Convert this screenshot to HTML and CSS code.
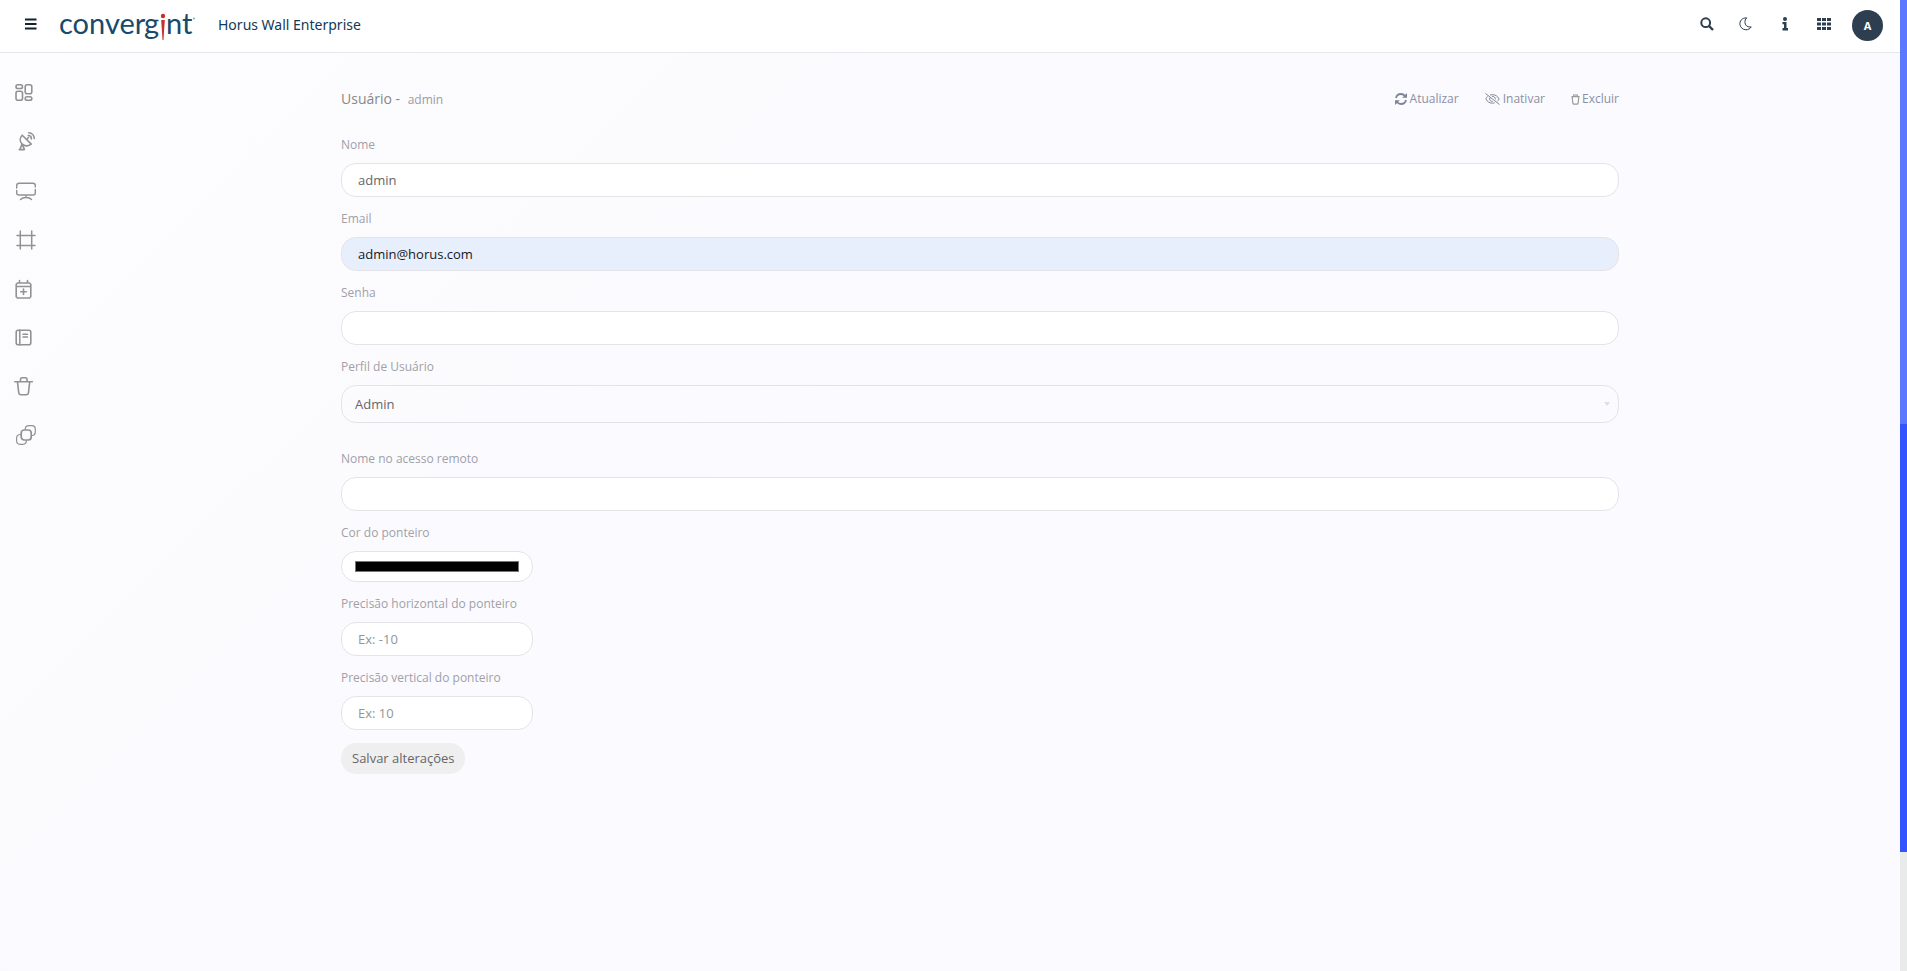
FILE: index.html
```html
<!DOCTYPE html>
<html lang="pt-BR">
<head>
<meta charset="utf-8">
<title>Horus Wall Enterprise</title>
<link rel="stylesheet" href="styles.css">
</head>
<body>
<div class="app">
  <header class="topbar">
    <button class="icon-btn menu" aria-label="Menu"><svg width="12" height="12" viewBox="0 0 12 12"><path d="M0 1.5h11.500M0 6h11.500M0 10.500h11.500" stroke="#14232c" stroke-width="2"/></svg></button>
    <a class="logo" href="#" aria-label="Convergint">
      <svg width="138" height="44" viewBox="0 0 138 44">
        <text class="logo-text" x="0" y="32">conver</text>
        <text class="logo-text" x="85" y="32">g</text>
        <text class="logo-text" x="107" y="32">nt</text>
        <circle cx="104" cy="14" r="2.200" fill="#c8302c"/>
        <path d="M102.200 18h3.600L104.500 38h-1z" fill="#c8302c"/>
        <circle cx="135" cy="16.500" r="1" fill="#8aa3b5"/>
      </svg>
    </a>
    <span class="product">Horus Wall Enterprise</span>
    <nav class="tools" aria-label="Ferramentas">
      <button class="icon-btn" aria-label="Buscar"><svg width="14" height="14" viewBox="0 0 14 14" fill="none" stroke="#2c3e4f"><circle cx="5.700" cy="5.700" r="4.400" stroke-width="2"/><path d="M9 9l4 4" stroke-width="2.400"/></svg></button>
      <button class="icon-btn" aria-label="Modo escuro"><svg width="14" height="14" viewBox="0 0 14 14" fill="none" stroke="#2c3e4f" stroke-width="1"><path d="M7.800.9C2.500.6.700 4.500.9 7.200c.3 3.200 2.800 5.500 6 5.600 2.400 0 4.200-1.100 5.300-2.900-3.200.6-5.800-1-6.200-4C5.700 3.800 6.400 2 7.800.9z" stroke-linejoin="round"/></svg></button>
      <button class="icon-btn" aria-label="Informações"><svg width="14" height="14" viewBox="0 0 14 14" fill="#2c3e4f"><circle cx="7" cy="2" r="2"/><path d="M4.500 5h4v6H10v2.500H4.500V11H6V7.200H4.500z"/></svg></button>
      <button class="icon-btn" aria-label="Aplicativos"><svg width="14" height="14" viewBox="0 0 14 14" fill="#2c3e4f"><path d="M0 1h4v3H0zM5 1h4v3H5zM10 1h4v3h-4zM0 5.500h4v3H0zM5 5.500h4v3H5zM10 5.500h4v3h-4zM0 10h4v3H0zM5 10h4v3H5zM10 10h4v3h-4z"/></svg></button>
      <button class="avatar" aria-label="Conta">A</button>
    </nav>
  </header>
  <div class="body">
    <nav class="sidebar" aria-label="Principal">
      <a href="#" aria-label="Painel"><svg viewBox="0 0 24 24"><g stroke-width="1.600"><rect x="2" y="4.800" width="6.500" height="3.700" rx="1.800"/><rect x="11.200" y="4.800" width="6.600" height="9" rx="2"/><rect x="2" y="11.300" width="6.500" height="9" rx="2"/><rect x="11.200" y="16.700" width="6.600" height="3.600" rx="1.800"/></g></svg></a>
      <a href="#" aria-label="Fontes"><svg viewBox="0 0 24 24"><path d="M8.200 6.200c-2.800 3-2.400 6.500-.2 8.700 2.300 2.300 5.800 2.600 9.300.2zM8 15l-2 5.300M5.300 20.600h5M8.500 16.500l2 3.800M12.500 10.500l2-2M14.200 6.500c1.800 0 3.200 1.400 3.200 3.400M14.700 3.700c3.200.2 5.500 2.600 5.600 5.800" stroke-width="1.600"/></svg></a>
      <a href="#" aria-label="Telas"><svg viewBox="0 0 24 24"><path d="M2.700 10V7.500c0-1.600.9-2.300 2.300-2.300h14c1.600 0 2.300.9 2.300 2.300V9M21.300 11.500V15c0 1.400-.8 2-2.300 2H5c-1.600 0-2.300-.7-2.300-2v-2.500M12 17v2.300M6.500 21.500c1.300-1.500 3.200-2 5.500-2s4.300.5 5.500 2" stroke-width="1.400"/></svg></a>
      <a href="#" aria-label="Layouts"><svg viewBox="0 0 24 24"><path d="M6.300 4v18M17.700 4v18M3 8.400h18M3 18.500h18" stroke-width="1.500"/></svg></a>
      <a href="#" aria-label="Agenda"><svg viewBox="0 0 24 24"><path d="M3.500 7h12l1.300 1.300v12.400L15.500 22h-12l-1.300-1.300V8.300zM2.200 10.500h14.600M5.500 4.500V7M13.500 4.500V7M9.500 13v5.500M6.700 15.700h5.600" stroke-width="1.600"/></svg></a>
      <a href="#" aria-label="Registros"><svg viewBox="0 0 24 24"><rect x="2.200" y="5.200" width="14.600" height="14.600" rx="2" stroke-width="1.600"/><path d="M5.800 5v15M9 9.200h4.500M9 12h4.500" stroke-width="1.500"/></svg></a>
      <a href="#" aria-label="Lixeira"><svg viewBox="0 0 24 24"><path d="M.8 7.700h17.600M6.500 7.500V5.300c0-1 .5-1.500 1.500-1.500h3.500c1 0 1.500.5 1.500 1.500v2.200M3.500 8l1.200 10.500c.1 1.200.8 2.300 2.300 2.300h5.200c1.500 0 2.200-1.100 2.300-2.300L15.700 8" stroke-width="1.600"/></svg></a>
      <a href="#" aria-label="Grupos"><svg viewBox="0 0 24 24"><rect x="7.200" y="7" width="10" height="10" rx="3" stroke-width="1.700"/><path d="M11.200 6.500c0-2.500 1.400-3.800 3.800-3.800h2.800c2.200 0 3.500 1.300 3.500 3.500v2.600c0 2.300-1.200 3.700-3.400 3.700M6.800 11.500c-2.700 0-4.200 1.200-4.200 3.500v2.800c0 2.200 1.300 3.500 3.500 3.500h2.700c2.300 0 3.600-1.400 3.600-3.700" stroke-width="1.200"/></svg></a>
    </nav>
    <main class="main">
      <div class="content">
        <div class="heading">
          <h1>Usuário - <small>admin</small></h1>
          <div class="actions">
            <button><svg width="12" height="12" viewBox="0 0 12 12" fill="none" stroke="#7e8498" stroke-width="1.800"><path d="M1 5C1.500 2.500 3.600 1 6 1c1.700 0 3 .7 4 2M11 7c-.5 2.500-2.600 4-5 4-1.700 0-3-.7-4-2"/><path d="M12 0v4.800H7.200zM0 12V7.200h4.800z" fill="#7e8498" stroke="none"/></svg><span>Atualizar</span></button>
            <button><svg width="15" height="12" viewBox="0 0 15 12" fill="none" stroke="#7e8498" stroke-width="1"><path d="M.5.5l14 11M2.500 3.300C1.800 4 1.200 5 .9 5.900c1.300 2.700 3.700 4.300 6.600 4.300.8 0 1.500-.1 2.200-.4M5 2.100c.8-.3 1.600-.4 2.500-.4 2.900 0 5.300 1.600 6.600 4.200-.4.900-1 1.700-1.800 2.400M4.800 4.700c-.7 2 .7 3.900 2.900 3.900M7 3.300c1.900-.2 3.500 1.200 3.400 3.100"/></svg><span>Inativar</span></button>
            <button class="delete"><svg width="9" height="11" viewBox="0 0 10 12" fill="none" stroke="#9a9a9a" stroke-width="1.300"><path d="M.5 2.800h9M3 2.600V1h4v1.600M1.300 3l.7 6.700c.1.900.6 1.500 1.500 1.500h3c.9 0 1.400-.6 1.500-1.500L8.700 3"/></svg><span>Excluir</span></button>
          </div>
        </div>
        <form>
          <div class="field"><label for="name">Nome</label><input class="control" id="name" type="text" value="admin"></div>
          <div class="field"><label for="email">Email</label><input class="control filled" id="email" type="email" value="admin@horus.com"></div>
          <div class="field"><label for="password">Senha</label><input class="control" id="password" type="password"></div>
          <div class="field spaced"><label for="profile">Perfil de Usuário</label><div class="select-wrap"><select class="control" id="profile"><option>Admin</option></select></div></div>
          <div class="field"><label for="remote">Nome no acesso remoto</label><input class="control" id="remote" type="text"></div>
          <div class="field"><label for="color">Cor do ponteiro</label><input class="control short color" id="color" type="color" value="#000000"></div>
          <div class="field"><label for="hprec">Precisão horizontal do ponteiro</label><input class="control short" id="hprec" type="text" placeholder="Ex: -10"></div>
          <div class="field"><label for="vprec">Precisão vertical do ponteiro</label><input class="control short" id="vprec" type="text" placeholder="Ex: 10"></div>
          <button class="save" type="submit">Salvar alterações</button>
        </form>
      </div>
    </main>
  </div>
</div>
<div class="scroll-track" aria-hidden="true"><div class="scroll-upper"></div><div class="scroll-lower"></div></div>
</body>
</html>
```
FILE: styles.css
```css
* { box-sizing: border-box; }
body {
  margin: 0;
  min-height: 100vh;
  display: flex;
  font-family: "Open Sans", sans-serif;
  font-size: 13px;
  color: #666;
  background: linear-gradient(135deg, #fdfdfe 0%, #fafaff 45%, #fafaff 100%);
}
button { font: inherit; color: inherit; border: 0; background: none; padding: 0; cursor: pointer; }
svg { display: block; }
.app { flex: 1; min-width: 0; display: flex; flex-direction: column; }

.topbar {
  height: 53px;
  display: flex;
  align-items: center;
  padding: 0 17px 4px 25px;
  background: #fff;
  border-bottom: 1px solid #e4e8ed;
}
.menu { margin-right: 22px; }
.logo-text { font-family: Lato, sans-serif; font-size: 29px; fill: #174a6b; }
.product {
  margin-left: 21px;
  font-family: "Noto Sans", sans-serif;
  font-size: 14px;
  color: #123a55;
}
.tools { margin-left: auto; display: flex; align-items: center; gap: 25px; }
.avatar {
  width: 31px;
  height: 31px;
  margin-left: -4px;
  margin-top: 3px;
  border-radius: 50%;
  background: #2c3e4f;
  color: #fff;
  font-size: 11px;
  font-weight: 700;
}

.body { flex: 1; display: flex; }
.sidebar {
  width: 60px;
  padding: 27px 0 0 14px;
  display: flex;
  flex-direction: column;
  gap: 25px;
}
.sidebar svg {
  width: 24px;
  height: 24px;
  fill: none;
  stroke: #929292;
  stroke-linecap: round;
  stroke-linejoin: round;
}
.main { flex: 1; min-width: 0; padding: 35px 24px; }
.content { max-width: 1278px; margin: 0 auto; }
.heading {
  height: 48px;
  display: flex;
  justify-content: space-between;
  align-items: flex-start;
}
h1 { margin: 0; font-size: 14px; line-height: 22px; font-weight: 400; color: #888; }
h1 small { margin-left: 4px; font-size: 12px; color: #9b9ba3; }
.actions { display: flex; gap: 26px; font-size: 12px; line-height: 22px; color: #8b90a3; }
.actions button { display: flex; align-items: center; gap: 3px; }
.actions .delete { gap: 2px; }

.field { margin-bottom: 13px; }
.field.spaced { margin-bottom: 27px; }
label {
  display: block;
  margin-bottom: 9px;
  font-size: 12px;
  line-height: 18px;
  color: #a0a0a8;
}
.control {
  display: block;
  width: 100%;
  height: 34px;
  padding: 0 16px 1px;
  border: 1px solid #e4e4e8;
  border-radius: 15px;
  background: #fff;
  font: inherit;
  color: #666;
}
.control::placeholder { color: #959595; opacity: 1; }
.filled { background: #e8effc; color: #17171c; }
.short { width: 192px; }
.color { height: 31px; padding: 5px 11px; }
.select-wrap { display: grid; align-items: center; }
.select-wrap > *, .select-wrap::after { grid-area: 1 / 1; }
.select-wrap::after {
  content: "";
  justify-self: end;
  margin-right: 9px;
  border: 3px solid transparent;
  border-top: 4px solid #dedee4;
  border-bottom: 0;
  pointer-events: none;
}
select.control { height: 38px; padding: 0 14px 1px 13px; appearance: none; background: transparent; }
.save {
  height: 31px;
  padding: 0 10px 2px 11px;
  border-radius: 15px;
  background: #efefef;
  color: #666;
}

.scroll-track {
  width: 7px;
  display: flex;
  flex-direction: column;
  background: #e9eaea;
}
.scroll-upper { height: 43.7%; background: #5c78ff; }
.scroll-lower { height: 44%; background: #3454ff; }
```
